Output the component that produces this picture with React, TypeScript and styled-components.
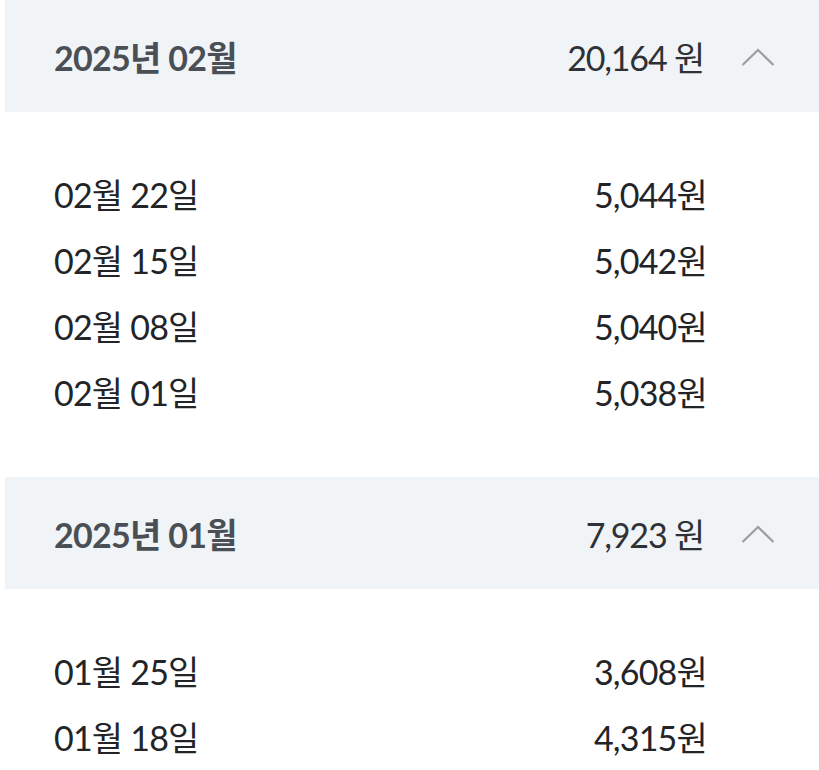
import React from "react";
import styled, { createGlobalStyle } from "styled-components";

const Global = createGlobalStyle`
  html, body { margin: 0; padding: 0; background: #ffffff; overflow: hidden; }
  body { font-family: Lato, "Noto Sans CJK KR", sans-serif; }
`;

const Page = styled.div`
  width: 819px;
  padding-left: 5px;
  box-sizing: border-box;
  background: #ffffff;
`;

const Section = styled.section`
  display: flex;
  flex-direction: column;
`;

const Header = styled.div`
  height: 112px;
  background: #f1f4f7;
  display: flex;
  align-items: center;
  padding: 0 44px 0 49px;
`;

const Title = styled.div`
  flex: 1;
  font-size: 34px;
  font-weight: 700;
  color: #4a4f56;
  letter-spacing: -0.7px;
`;

const Total = styled.div`
  font-size: 34px;
  font-weight: 400;
  color: #2e3135;
  letter-spacing: -1.2px;
`;

const Chevron = styled.svg`
  width: 34px;
  height: 20px;
  margin-left: 37px;
  margin-top: 2px;
`;

const List = styled.div`
  display: flex;
  flex-direction: column;
  padding: 48px 112px 53px 49px;
`;

const Row = styled.div`
  height: 66px;
  display: flex;
  align-items: center;
  justify-content: space-between;
  font-size: 34px;
  color: #222428;
  letter-spacing: -0.8px;
`;

type Item = { date: string; amount: string };
type Month = { title: string; total: string; items: Item[] };

const data: Month[] = [
  {
    title: "2025년 02월",
    total: "20,164 원",
    items: [
      { date: "02월 22일", amount: "5,044원" },
      { date: "02월 15일", amount: "5,042원" },
      { date: "02월 08일", amount: "5,040원" },
      { date: "02월 01일", amount: "5,038원" },
    ],
  },
  {
    title: "2025년 01월",
    total: "7,923 원",
    items: [
      { date: "01월 25일", amount: "3,608원" },
      { date: "01월 18일", amount: "4,315원" },
    ],
  },
];

export default function App() {
  return (
    <Page>
      <Global />
      {data.map((m) => (
        <Section key={m.title}>
          <Header>
            <Title>{m.title}</Title>
            <Total>{m.total}</Total>
            <Chevron viewBox="0 0 34 20" fill="none">
              <path d="M1.5 18 L17 3 L32.5 18" stroke="#9a9da1" strokeWidth="2.2" />
            </Chevron>
          </Header>
          <List>
            {m.items.map((it) => (
              <Row key={it.date}>
                <span>{it.date}</span>
                <span>{it.amount}</span>
              </Row>
            ))}
          </List>
        </Section>
      ))}
    </Page>
  );
}
